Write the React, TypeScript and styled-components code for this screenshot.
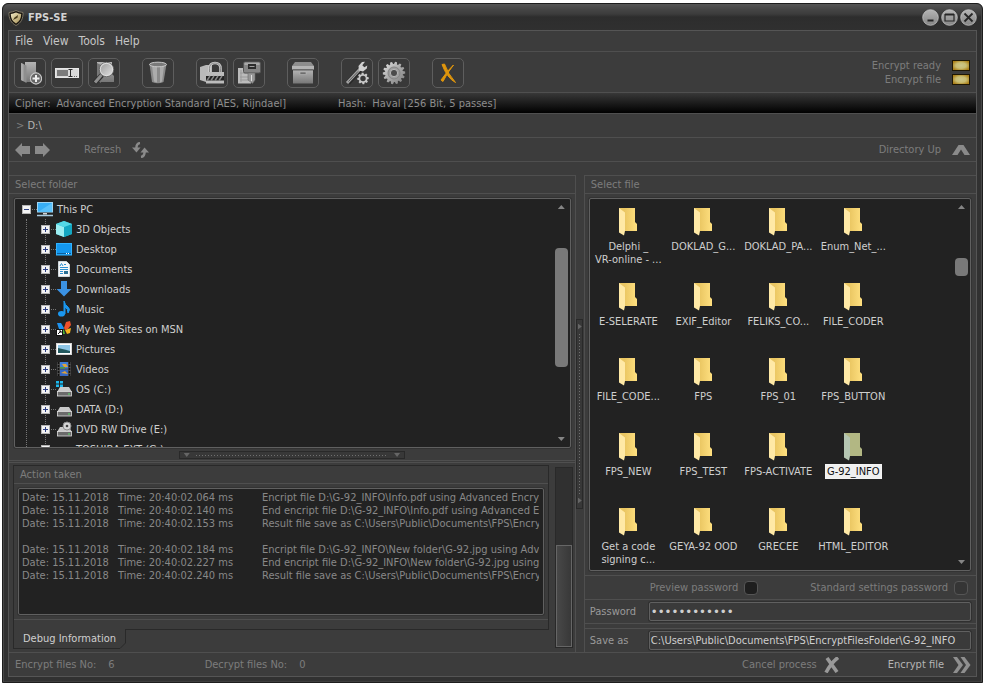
import React from "react";
import styled, { createGlobalStyle, css } from "styled-components";

const c = {
  base: "#3c3c3c",
  line: "#4f4f4f",
  dark: "#292929",
  well: "#222222",
  wellEdge: "#606060",
  dim: "#7c7c7c",
  mid: "#9a9a9a",
  text: "#cfcfcf",
};

const Global = createGlobalStyle`
  * { box-sizing: border-box; }
  body { margin: 0; background: #fff; }
  body, button, input {
    font-family: "DejaVu Sans Condensed", Tahoma, "DejaVu Sans", sans-serif;
    font-size: 11px;
    line-height: 13px;
    color: ${c.dim};
  }
  button { background: none; border: 0; padding: 0; margin: 0; }
  ul { list-style: none; margin: 0; padding: 0; }
  svg { display: block; flex: none; }
`;

const Page = styled.div`
  display: flex;
  height: 100vh;
  min-height: 560px;
  padding: 3px 4px 5px 2px;
`;

const Window = styled.div`
  flex: 1;
  min-width: 0;
  display: flex;
  flex-direction: column;
  padding: 0 5px 5px;
  background: #313131;
  border: 1px solid #1d1d1d;
  border-radius: 6px 6px 0 0;
  box-shadow: inset 1px 0 0 #484848, inset -1px 0 0 #484848, inset 0 -1px 0 #3e3e3e;
  background-image: linear-gradient(#555 0, #444 6px, #3c3c3c 10px, #2d2d2d 13px, #303030 27px, #313131 28px);
`;

const TitleBar = styled.header`
  display: flex;
  align-items: center;
  height: 26px;
  gap: 4px;
  padding: 1px 0 0;
`;

const Title = styled.h1`
  flex: 1;
  margin: 0;
  font-size: 11px;
  line-height: 14px;
  font-weight: bold;
  color: #d2d2d2;
`;

const WindowButtons = styled.div`
  display: flex;
  gap: 2px;
`;

const RoundButton = styled.button`
  display: block;
  width: 17px;
  height: 17px;
`;

const Frame = styled.div`
  flex: 1;
  min-height: 0;
  display: flex;
  flex-direction: column;
  background: ${c.base};
  border: 1px solid #555;
`;

const Row = styled.div<{ $h: number }>`
  display: flex;
  align-items: center;
  flex: none;
  height: ${(p) => p.$h}px;
  padding: 0 6px;
  border-bottom: 1px solid ${c.line};
`;

const Menu = styled.nav`
  display: flex;
  gap: 10px;
`;

const MenuItem = styled.button`
  color: #c6c6c6;
  font-size: 12px;
  line-height: 14px;
`;

const ToolRow = styled(Row)`
  padding-left: 5px;
`;

const Tools = styled.div`
  display: flex;
  flex: 1;
  gap: 22px;
  margin-top: 2px;
`;

const ToolGroup = styled.div`
  display: flex;
  gap: 5px;
`;

const ToolButton = styled.button`
  display: flex;
  align-items: center;
  justify-content: center;
  width: 32px;
  height: 30px;
  border: 1px solid #5e5e5e;
  border-radius: 5px;
  background: #393939;
`;

const Leds = styled.div`
  display: flex;
  flex-direction: column;
  gap: 1px;
`;

const LedRow = styled.div`
  display: flex;
  align-items: center;
  justify-content: flex-end;
  gap: 11px;
`;

const Led = styled.span`
  width: 18px;
  height: 11px;
  border: 1px solid #1f1703;
  background: radial-gradient(ellipse at center, #cdc68a 0, #c9bd72 45%, #ab8019 85%);
`;

const CipherBar = styled(Row)`
  color: #8d8d8d;
  background: linear-gradient(#383838, #000);
`;

const Pair = styled.span<{ $w: number }>`
  display: flex;
  gap: 6px;
  flex: 0 1 ${(p) => p.$w}px;
  white-space: nowrap;
`;

const PathText = styled.span`
  padding-left: 1px;
  color: #b4b4b4;
  i { font-style: normal; color: ${c.dim}; }
`;

const IconButton = styled.button<{ $bright?: boolean; $gap?: number }>`
  display: flex;
  align-items: center;
  gap: ${(p) => p.$gap ?? 9}px;
  color: ${(p) => (p.$bright ? "#b5b5b5" : c.dim)};
  white-space: nowrap;
`;

const Arrows = styled.div`
  display: flex;
  gap: 5px;
  margin-right: 34px;
`;

const Spacer = styled.div`
  flex: 1;
`;

const Main = styled.main`
  flex: 1;
  min-height: 0;
  display: flex;
  padding-top: 13px;
  border-bottom: 1px solid ${c.line};
`;

const Column = styled.section<{ $grow: number; $side: "left" | "right" }>`
  flex: ${(p) => p.$grow} 1 0;
  min-width: 0;
  display: flex;
  flex-direction: column;
  border-${(p) => (p.$side === "left" ? "right" : "left")}: 1px solid ${c.line};
`;

const PanelTitle = styled.h2`
  flex: none;
  margin: 0;
  height: 19px;
  padding: 2px 6px;
  font-size: 11px;
  line-height: 13px;
  font-weight: normal;
  border-top: 1px solid ${c.line};
  border-bottom: 1px solid ${c.line};
`;

const wellStyle = css`
  background: ${c.well};
  border: 1px solid ${c.wellEdge};
  border-radius: 2px;
  box-shadow: 0 0 0 1px #333;
`;

const Well = styled.div`
  ${wellStyle}
  flex: 1;
  min-height: 0;
  display: flex;
  margin: 4px 4px 4px 5px;
  overflow: hidden;
`;

const TreeWell = styled(Well)`
  margin-bottom: 3px;
`;

const FileWell = styled(Well)`
  margin: 4px 5px 4px 4px;
`;

const Tree = styled.ul`
  flex: 1;
  min-width: 0;
  padding-left: 7px;
  overflow: hidden;
`;

const TreeRow = styled.div`
  display: flex;
  align-items: center;
  height: 20px;
  color: ${c.text};
  white-space: nowrap;
`;

const Branch = styled.ul`
  margin-left: 4px;
  padding-left: 14px;
  border-left: 1px dotted #777;
`;

const BranchItem = styled.li`
  background: linear-gradient(#777 50%, transparent 50%) 4px 0 / 1px 2px repeat-y;
`;

const Expander = styled.button`
  display: block;
  width: 9px;
  height: 9px;
`;

const Twig = styled.span`
  width: 5px;
  margin-left: 1px;
  border-top: 1px dotted #777;
`;

const TreeIcon = styled.span`
  width: 16px;
  margin-right: 4px;
`;

const Scroll = styled.div`
  flex: none;
  display: flex;
  flex-direction: column;
  align-items: center;
  width: 17px;
  padding: 6px 2px;
`;

const ScrollArrow = styled.button<{ $down?: boolean }>`
  width: 7px;
  height: 4px;
  background: #858585;
  clip-path: ${(p) => (p.$down ? "polygon(0 0, 100% 0, 50% 100%)" : "polygon(50% 0, 100% 100%, 0 100%)")};
`;

const Track = styled.div`
  flex: 1;
  width: 13px;
  padding: 4px 0;
  display: flex;
  flex-direction: column;
`;

const Before = styled.div`
  flex: none;
`;

const Thumb = styled.div`
  flex: none;
  min-height: 18px;
  background: #797979;
  border-radius: 4px;
`;

const grip = "repeating-linear-gradient";

const HGrip = styled.div`
  flex: none;
  align-self: center;
  display: flex;
  align-items: center;
  gap: 6px;
  width: 40%;
  height: 8px;
  margin: 0 0 1px;
  padding: 0 4px;
  border: 1px solid ${c.dark};
  background: #383838;
`;

const VGutter = styled.div`
  flex: none;
  display: flex;
  align-items: center;
  justify-content: center;
  width: 8px;
`;

const VGrip = styled.div`
  display: flex;
  flex-direction: column;
  align-items: center;
  gap: 4px;
  width: 7px;
  height: 190px;
  padding: 4px 0;
  border: 1px solid ${c.dark};
  background: #383838;
`;

const HDots = styled.div`
  flex: 1;
  height: 1px;
  background: ${grip}(90deg, #707070 0 1px, transparent 1px 3px);
`;

const VDots = styled.div`
  flex: 1;
  width: 1px;
  background: ${grip}(#707070 0 1px, transparent 1px 3px);
`;

const GripMark = styled.span<{ $dir: "down" | "right" }>`
  width: ${(p) => (p.$dir === "down" ? 6 : 4)}px;
  height: ${(p) => (p.$dir === "down" ? 4 : 6)}px;
  background: #666;
  clip-path: ${(p) => (p.$dir === "down" ? "polygon(0 0, 100% 0, 50% 100%)" : "polygon(0 0, 100% 50%, 0 100%)")};
`;

const Lower = styled.div`
  flex: none;
  display: flex;
  gap: 6px;
  padding: 2px 2px 3px 4px;
  border-top: 3px double ${c.line};
`;

const Tabs = styled.div`
  flex: 1;
  min-width: 0;
`;

const TabBody = styled.div`
  border: 1px solid ${c.dark};
  border-bottom: 0;
`;

const LogTitle = styled(PanelTitle)`
  height: 18px;
  border-top: 0;
`;

const Log = styled.div`
  ${wellStyle}
  height: 127px;
  margin: 4px 4px 4px;
  padding: 2px 4px 0 3px;
`;

const LogRows = styled.div`
  overflow: hidden;
`;

const LogLine = styled.div`
  display: grid;
  grid-template-columns: 96px 144px 1fr;
  height: 13px;
  color: #888;
  white-space: pre;
`;

const TabRule = styled.div`
  height: 10px;
  border-top: 1px solid ${c.line};
`;

const TabStrip = styled.div`
  display: flex;
`;

const TabButton = styled.button`
  height: 20px;
  padding: 0 4px 1px 9px;
  border-left: 1px solid ${c.dark};
  border-bottom: 1px solid ${c.dark};
  color: ${c.text};
`;

const TabFill = styled.div`
  flex: 1;
  border-top: 1px solid ${c.dark};
  margin-left: -1px;
`;

const OuterTrack = styled.div`
  flex: none;
  display: flex;
  flex-direction: column;
  justify-content: flex-end;
  width: 18px;
  margin: 2px 0 1px;
  background: #303030;
  border: 1px solid ${c.dark};
`;

const OuterThumb = styled.div`
  height: 57%;
  background: linear-gradient(90deg, #484848, #383838);
  border: 1px solid #666;
`;

const Files = styled.ul`
  flex: 1;
  min-width: 0;
  display: grid;
  grid-template-columns: repeat(4, 75px);
  grid-auto-rows: 75px;
  padding: 9px 0 0 1px;
  overflow: hidden;
`;

const FileItem = styled.li`
  display: flex;
  flex-direction: column;
  align-items: center;
  gap: 3px;
`;

const FileLabel = styled.span<{ $on?: boolean }>`
  padding: 0 1px;
  border: 1px solid ${(p) => (p.$on ? "#f4f4f4" : "transparent")};
  background: ${(p) => (p.$on ? "#f0f0f0" : "none")};
  color: ${(p) => (p.$on ? "#111" : c.text)};
  text-align: center;
  white-space: pre;
`;

const CheckRow = styled(Row)`
  justify-content: flex-end;
  gap: 52px;
  padding-right: 8px;
  border-top: 1px solid ${c.line};
`;

const Check = styled.label`
  display: flex;
  align-items: center;
  gap: 6px;
  white-space: nowrap;
`;

const Box = styled.input`
  appearance: none;
  width: 14px;
  height: 14px;
  margin: 0;
  border: 1px solid #555;
  border-radius: 4px;
  background: #1e1e1e;
  &:disabled { background: #353535; }
`;

const Field = styled.div<{ $last?: boolean }>`
  flex: none;
  display: flex;
  align-items: center;
  height: 24px;
  padding: 0 5px;
  color: ${c.mid};
  ${(p) => (p.$last
    ? css`margin-top: 4px; border-top: 1px solid ${c.line};`
    : css`border-bottom: 1px solid ${c.line};`)}
  label { width: 59px; }
`;

const Input = styled.input`
  flex: 1;
  min-width: 0;
  height: 19px;
  padding: 0 1px;
  border: 1px solid ${c.wellEdge};
  border-radius: 2px;
  background: #3a3a3a;
  box-shadow: 0 0 0 1px #303030;
  color: ${c.text};
  outline: none;
  &[type="password"] { font-size: 13px; }
`;

const Status = styled.footer`
  flex: none;
  display: flex;
  align-items: center;
  height: 23px;
  padding: 0 5px 0 6px;
`;

const Count = styled.span`
  display: flex;
  gap: 12px;
  margin-right: 90px;
`;

const Actions = styled.div`
  display: flex;
  gap: 48px;
`;

/* ---------- icons ---------- */

const Gradients = () => (
  <svg width="0" height="0" aria-hidden="true">
    <defs>
      <linearGradient id="metal" x1="0" y1="0" x2="1" y2="1">
        <stop offset="0" stopColor="#e2e2e2" />
        <stop offset=".5" stopColor="#a9a9a9" />
        <stop offset="1" stopColor="#7b7b7b" />
      </linearGradient>
      <linearGradient id="lens" x1="0" y1="0" x2="1" y2="1">
        <stop offset="0" stopColor="#9e9e9e" />
        <stop offset="1" stopColor="#dedede" />
      </linearGradient>
      <linearGradient id="sheet" x1="0" y1="0" x2="0" y2="1">
        <stop offset="0" stopColor="#b4b4b4" />
        <stop offset="1" stopColor="#777" />
      </linearGradient>
      <linearGradient id="disc" x1="0" y1="0" x2="0" y2="1">
        <stop offset="0" stopColor="#b5b5b5" />
        <stop offset="1" stopColor="#858585" />
      </linearGradient>
      <linearGradient id="fold" x1="0" y1="0" x2="1" y2="0">
        <stop offset=".3" stopColor="#eac662" />
        <stop offset="1" stopColor="#ffe080" />
      </linearGradient>
      <linearGradient id="gold" x1="0" y1="0" x2="1" y2="1">
        <stop offset="0" stopColor="#f3ecc6" />
        <stop offset="1" stopColor="#a48d52" />
      </linearGradient>
    </defs>
  </svg>
);

const Shield = () => (
  <svg width="16" height="16" viewBox="0 0 15 16">
    <path d="M7.500 .5C10 1.800 12 2 14.500 2.500C14.800 8.500 12.500 13 7.500 15.500C2.500 13 .2 8.500 .5 2.500C3 2 5 1.800 7.500 .5Z" fill="#191510" stroke="#8f8874" strokeWidth=".8" />
    <path d="M7.500 2.500C9.500 3.500 11 3.600 12.700 4C12.700 8.500 11 11.600 7.500 13.500C4 11.600 2.300 8.500 2.300 4C4 3.600 5.500 3.500 7.500 2.500Z" fill="url(#gold)" />
    <path d="M4.500 10L6 7.500L9.500 5L9 7.800L6.500 9Z" fill="#4a3d1c" />
  </svg>
);

const Disc = ({ children }: { children: React.ReactNode }) => (
  <svg width="17" height="17" viewBox="0 0 17 17">
    <circle cx="8.500" cy="8.500" r="7.800" fill="url(#disc)" stroke="#c4c4c4" strokeWidth=".8" />
    <g fill="none" stroke="#262626">{children}</g>
  </svg>
);

const gearPath = (cx: number, cy: number, outer: number, inner: number, n: number) => {
  const pts: string[] = [];
  for (let i = 0; i < n; i++) {
    [[-0.5, inner], [-0.28, outer], [0.1, outer], [0.28, inner]].forEach(([o, r]) => {
      const a = ((i + o) / n) * Math.PI * 2;
      pts.push(`${(cx + r * Math.cos(a)).toFixed(2)} ${(cy + r * Math.sin(a)).toFixed(2)}`);
    });
  }
  return `M${pts.join("L")}Z`;
};

const toolArt: Record<string, React.ReactNode> = {
  "Add folder": (
    <>
      <path d="M7 1H18V11L19.500 12.500V21H7Z" fill="url(#sheet)" />
      <path d="M3 2L8.500 4.500V22L3 19Z" fill="#8e8e8e" />
      <path d="M3 2L5.500 3V20.300L3 19Z" fill="#a9a9a9" />
      <circle cx="18" cy="17.500" r="5.600" fill="#666" stroke="#c9c9c9" strokeWidth="1.100" />
      <path d="M18 14V21M14.500 17.500H21.500" stroke="#f0f0f0" strokeWidth="2" />
    </>
  ),
  Rename: (
    <>
      <rect x=".5" y="7.500" width="23" height="9" fill="#d9d9d9" stroke="#e6e6e6" />
      <rect x="2" y="9" width="11" height="6" fill="#7b7b7b" />
      <path d="M13.500 8.500H17.500M15.500 8.500V15.500M13.500 15.500H17.500" stroke="#2b2b2b" />
      <path d="M19 15.500H22" stroke="#666" strokeDasharray="1 1" />
    </>
  ),
  "Find folder": (
    <>
      <path d="M5 1H20V13L22 15V21H5Z" fill="url(#sheet)" />
      <path d="M5 2L9 4V22L5 19Z" fill="#777" />
      <path d="M10 14L2.500 22" stroke="#2f2f2f" strokeWidth="5" />
      <path d="M9.500 14L3 21.500" stroke="#8f8f8f" strokeWidth="3" />
      <circle cx="14.500" cy="8.500" r="7.200" fill="#e0e0e0" stroke="#5c5c5c" strokeWidth=".8" />
      <circle cx="14.500" cy="8.500" r="5.800" fill="url(#lens)" />
    </>
  ),
  Delete: (
    <>
      <path d="M3.500 3L6 21Q12 23.500 17.500 21L20.500 3Z" fill="#8a8a8a" />
      <path d="M6 5L8 20.500L11 21.500V5ZM14 5V21.500L16 20.500L18 5Z" fill="#acacac" />
      <ellipse cx="12" cy="3.500" rx="8.500" ry="2.300" fill="#7a7a7a" stroke="#c9c9c9" />
    </>
  ),
  "Encrypt folder": (
    <>
      <path d="M0 6L6 4V21L0 19ZM6 4H12V20H6Z" fill="#b9b9b9" />
      <path d="M9.500 13V7.500Q9.500 2 15 2T20.500 7.500V13" fill="none" stroke="#d0d0d0" strokeWidth="2.500" />
      <path d="M9.500 13V7.500Q9.500 2 15 2T20.500 7.500V13" fill="none" stroke="#777" strokeWidth=".8" />
      <rect x="6" y="11" width="18" height="11.500" fill="#bcbcbc" />
      <rect x="6" y="15" width="18" height="4.500" fill="#222" />
      <path d="M7 19.500L10 15M11 19.500L14 15M15 19.500L18 15M19 19.500L22 15" stroke="#858585" strokeWidth="1.500" />
    </>
  ),
  "Encrypt key": (
    <>
      <path d="M1 7H14V22.500H1Z" fill="#bcbcbc" />
      <path d="M4 9V21M3 12H12M3 16H12M3 19H12" stroke="#9a9a9a" />
      <rect x="6.500" y="1" width="17" height="11" rx="1.500" fill="#858585" stroke="#555" />
      <rect x="7.500" y="1.500" width="15" height="2.500" fill="#a8a8a8" />
      <rect x="11" y="3" width="8" height="5" fill="#2c2c2c" />
      <rect x="12.500" y="5" width="5" height="1" fill="#a0a0a0" />
      <path d="M11 12H18V19L15.500 22.500L11 19Z" fill="#979797" stroke="#6a6a6a" strokeWidth=".6" />
      <path d="M14.500 14V20" stroke="#ddd" />
    </>
  ),
  Archive: (
    <>
      <path d="M1 5L4 1H20L23 5V8H1Z" fill="#8d8d8d" />
      <path d="M1 5H23V8.500H1Z" fill="#b4b4b4" />
      <rect x="2" y="9" width="20" height="13.500" fill="url(#sheet)" />
      <path d="M2 9H22" stroke="#606060" />
      <rect x="9" y="11" width="6" height="2.500" fill="#6d6d6d" stroke="#b9b9b9" strokeWidth=".6" />
    </>
  ),
  Options: (
    <>
      <path d="M3 22L15 8.500" stroke="#292929" strokeWidth="5" />
      <path d="M2 22L15 8" stroke="#a3a3a3" strokeWidth="3" />
      <path d="M3.500 20.500L13 10.500" stroke="#595959" />
      <path d="M14 9.500L13.500 5L17 1L20 .8L17.300 4.200L19.300 6.200L22.300 4.400L21.800 7.500L18 10.500Z" fill="#d0d0d0" />
      <path d={gearPath(18, 17.500, 5.800, 4.300, 8)} fill="#c9c9c9" />
      <circle cx="18" cy="17.500" r="2.700" fill="#393939" />
    </>
  ),
  Settings: (
    <>
      <path d={gearPath(12, 12, 11.200, 9, 14)} fill="url(#metal)" />
      <circle cx="12" cy="12" r="6" fill="#9d9d9d" stroke="#858585" />
      <circle cx="12" cy="12" r="3.600" fill="#4b4b4b" stroke="#d5d5d5" strokeWidth=".7" />
    </>
  ),
  Exit: (
    <g strokeLinejoin="round">
      <path d="M6 3.500L8.500 3Q12 13 19.500 21.500Q11 17 6 3.500Z" fill="#e0960c" stroke="#e0960c" />
      <path d="M17.500 4Q12 9 5 19L7 20.500Q11 12 17.500 4Z" fill="#e0960c" stroke="#e0960c" />
    </g>
  ),
};

const Drive = () => (
  <>
    <path d="M4 6H13L16 11H1Z" fill="#c9c9c9" />
    <rect x="1.500" y="10.500" width="14" height="4.500" fill="#6b6b6b" stroke="#ddd" strokeWidth=".8" />
    <rect x="12" y="12.500" width="2" height="1" fill="#58e06a" />
  </>
);

const treeArt: Record<string, React.ReactNode> = {
  "This PC": (
    <>
      <rect x=".5" y="1.500" width="15" height="9.500" fill="#38aef5" stroke="#9fd4f2" />
      <path d="M1 11L15 2V11Z" fill="#5bc2fb" />
      <path d="M6 12H10V13.500H6Z" fill="#d5d5d5" />
      <path d="M0 14.500H16" stroke="#a9cbe0" strokeWidth="1.500" />
    </>
  ),
  "3D Objects": (
    <>
      <path d="M8 0L16 3V13L8 16L0 13V3Z" fill="#23bdd3" />
      <path d="M0 3L8 6V16L0 13Z" fill="#9ceef2" />
      <path d="M8 6L16 3V13L8 16Z" fill="#14a7c2" />
      <path d="M8 0L16 3L8 6L0 3Z" fill="#55d8e6" />
    </>
  ),
  Desktop: (
    <>
      <rect x=".5" y="2.500" width="15" height="11.500" fill="#1497ee" stroke="#30b2ff" />
      <path d="M1 12.500H15" stroke="#0b5f9c" />
      <path d="M10 12.500H11M12 12.500H13" stroke="#fff" />
    </>
  ),
  Documents: (
    <>
      <path d="M2.500 .5H10.500L13.500 3.500V15.500H2.500Z" fill="#f7f7f7" stroke="#cfd8dc" />
      <path d="M4 5L5.500 2.500L7 5M8 3.500H10M4 6.500H12M4 8.500H12M4 10.500H7M4 12.500H7" stroke="#2b8fd0" fill="none" />
      <rect x="8" y="10" width="4" height="3" fill="#2a6f93" />
    </>
  ),
  Downloads: <path d="M5 0H11V8H15.500L8 15.500L.5 8H5Z" fill="#3b92e4" />,
  Music: (
    <>
      <ellipse cx="5.500" cy="12.800" rx="3.500" ry="2.800" fill="#1a97ef" />
      <path d="M8 13V0Q9 4 12 6T12 12Q12 7.500 9 6V13Z" fill="#1a97ef" stroke="#1a97ef" />
    </>
  ),
  "My Web Sites on MSN": (
    <>
      <path d="M1 2L5 2L8 7L7 9L3 8Z" fill="#1e93f0" />
      <path d="M8 7L10 1L14 0L15 4L12 8L9 9Z" fill="#f0502a" />
      <path d="M9 9L15 7L14 12L11 13Z" fill="#f5b41c" />
      <path d="M5 9L8 9L9 13L6 13Z" fill="#4bb035" />
      <rect x=".5" y="8.500" width="6" height="6" fill="#fff" stroke="#111" />
      <path d="M2 13L5 10M3 10H5V12" stroke="#111" fill="none" />
    </>
  ),
  Pictures: (
    <>
      <rect x=".5" y="2.500" width="15" height="11" fill="#fff" stroke="#d7d7d7" />
      <rect x="2" y="4" width="12" height="8" fill="#8fc7e8" />
      <path d="M2 7Q7 8 14 10V12H2Z" fill="#22585e" />
    </>
  ),
  Videos: (
    <>
      <rect x="1" y="1" width="14" height="14" fill="#4a4a4a" />
      <path d="M2.500 1V15M13.500 1V15" stroke="#111" strokeWidth="1.500" strokeDasharray="2 1" />
      <rect x="4" y="1" width="8" height="6.500" fill="#3f7fd8" />
      <rect x="4" y="8.500" width="8" height="6.500" fill="#3567c4" />
      <path d="M6 3H10L12 6H8ZM5 12L9 10L12 13Z" fill="#e0a33a" />
      <path d="M4 6H9V7.500H4Z" fill="#4c9a45" />
    </>
  ),
  "OS (C:)": (
    <>
      <Drive />
      <path d="M0 0H3V2.500H0ZM4 0H7V2.500H4ZM0 3.500H3V6H0ZM4 3.500H7V6H4Z" fill="#1cb8ee" />
    </>
  ),
  "DATA (D:)": <Drive />,
  "DVD RW Drive (E:)": (
    <>
      <Drive />
      <circle cx="11" cy="5" r="4" fill="#d6d6d6" stroke="#8d8d8d" />
      <circle cx="11" cy="5" r="1.300" fill="#444" />
    </>
  ),
  "TOSHIBA EXT (G:)": <Drive />,
};

const FolderIcon = ({ selected }: { selected?: boolean }) => (
  <svg width="18" height="28" viewBox="0 0 18 28">
    <path d="M0 0H16V14L18 16V23H0Z" fill={selected ? "#b2b783" : "url(#fold)"} />
    <path d="M0 0L6 4.500V23L5 27.500L0 24.500Z" fill={selected ? "#b5c6b2" : "#ffe9a6"} />
  </svg>
);

const PlusMinus = ({ minus }: { minus?: boolean }) => (
  <svg width="9" height="9" viewBox="0 0 9 9">
    <rect width="9" height="9" fill="#f4f4f4" />
    <rect x=".5" y=".5" width="8" height="8" fill="none" stroke="#b5b5b5" />
    <path d={minus ? "M2 4.500H7" : "M2 4.500H7M4.500 2V7"} stroke="#2c3f82" />
  </svg>
);

/* ---------- data ---------- */

const toolGroups = [
  ["Add folder", "Rename", "Find folder"],
  ["Delete"],
  ["Encrypt folder", "Encrypt key"],
  ["Archive"],
  ["Options", "Settings"],
  ["Exit"],
];

const files = [
  "Delphi _\nVR-online - ...", "DOKLAD_G...", "DOKLAD_PA...", "Enum_Net_...",
  "E-SELERATE", "EXIF_Editor", "FELIKS_CO...", "FILE_CODER",
  "FILE_CODE...", "FPS", "FPS_01", "FPS_BUTTON",
  "FPS_NEW", "FPS_TEST", "FPS-ACTIVATE", "G-92_INFO",
  "Get a code\nsigning c...", "GEYA-92 OOD", "GRECEE", "HTML_EDITOR",
];

const log: [string, string][] = [
  ["20:40:02.064", "Encript file D:\\G-92_INFO\\Info.pdf using Advanced Encryp"],
  ["20:40:02.140", "End encript file D:\\G-92_INFO\\Info.pdf using Advanced En"],
  ["20:40:02.153", "Result file save as C:\\Users\\Public\\Documents\\FPS\\Encryp"],
  ["", ""],
  ["20:40:02.184", "Encript file D:\\G-92_INFO\\New folder\\G-92.jpg using Adva"],
  ["20:40:02.227", "End encript file D:\\G-92_INFO\\New folder\\G-92.jpg using"],
  ["20:40:02.240", "Result file save as C:\\Users\\Public\\Documents\\FPS\\Encryp"],
];

const ScrollBar = ({ start, size }: { start: number; size: number }) => (
  <Scroll>
    <ScrollArrow aria-label="Scroll up" />
    <Track>
      <Before style={{ height: `${start}%` }} />
      <Thumb style={{ height: `${size}%` }} />
    </Track>
    <ScrollArrow $down aria-label="Scroll down" />
  </Scroll>
);

const TreeNode = ({ name, open }: { name: string; open?: boolean }) => (
  <TreeRow>
    <Expander aria-label={`${open ? "Collapse" : "Expand"} ${name}`}>
      <PlusMinus minus={open} />
    </Expander>
    <Twig />
    <TreeIcon>
      <svg width="16" height="16" viewBox="0 0 16 16">{treeArt[name]}</svg>
    </TreeIcon>
    {name}
  </TreeRow>
);

export default function App() {
  return (
    <Page>
      <Global />
      <Window>
        <TitleBar>
          <Shield />
          <Title>FPS-SE</Title>
          <WindowButtons>
            <RoundButton aria-label="Minimize"><Disc><path d="M5.500 11.500H11.500" strokeWidth="2" /></Disc></RoundButton>
            <RoundButton aria-label="Maximize"><Disc><path d="M4 5.500H13V12H4Z" strokeWidth="1.200" /><path d="M4 5.500H13" strokeWidth="2" /></Disc></RoundButton>
            <RoundButton aria-label="Close"><Disc><path d="M4.500 4.500L12.500 12.500M12.500 4.500L4.500 12.500" strokeWidth="1.800" /></Disc></RoundButton>
          </WindowButtons>
        </TitleBar>
        <Frame>
          <Row $h={21}>
            <Menu>
              {["File", "View", "Tools", "Help"].map((m) => <MenuItem key={m}>{m}</MenuItem>)}
            </Menu>
          </Row>
          <ToolRow $h={41}>
            <Tools>
              {toolGroups.map((group) => (
                <ToolGroup key={group[0]}>
                  {group.map((t) => (
                    <ToolButton key={t} aria-label={t}>
                      <svg width="24" height="24" viewBox="0 0 24 24">{toolArt[t]}</svg>
                    </ToolButton>
                  ))}
                </ToolGroup>
              ))}
            </Tools>
            <Leds>
              <LedRow>Encrypt ready<Led /></LedRow>
              <LedRow>Encrypt file<Led /></LedRow>
            </Leds>
          </ToolRow>
          <CipherBar $h={21}>
            <Pair $w={323}><span>Cipher:</span><span>Advanced Encryption Standard [AES, Rijndael]</span></Pair>
            <Pair $w={300}><span>Hash:</span><span>Haval [256 Bit, 5 passes]</span></Pair>
          </CipherBar>
          <Row $h={24}>
            <PathText><i>&gt;</i> D:\</PathText>
          </Row>
          <Row $h={24}>
            <Arrows>
              <IconButton aria-label="Back">
                <svg width="15" height="14" viewBox="0 0 15 14"><path d="M0 7L7 0V3H15V11H7V14Z" fill="#8a8a8a" /></svg>
              </IconButton>
              <IconButton aria-label="Forward">
                <svg width="15" height="14" viewBox="0 0 15 14"><path d="M15 7L8 0V3H0V11H8V14Z" fill="#8a8a8a" /></svg>
              </IconButton>
            </Arrows>
            <IconButton $gap={11}>
              Refresh
              <svg width="17" height="16" viewBox="0 0 17 16">
                <path d="M8 1Q4 1.500 4.500 7" fill="none" stroke="#8a8a8a" strokeWidth="2.400" />
                <path d="M0 5.500H8.500L4.500 10.500Z" fill="#8a8a8a" />
                <path d="M9 15Q13 14.500 12.500 9" fill="none" stroke="#8a8a8a" strokeWidth="2.400" />
                <path d="M8.500 10.500H17L12.500 5.500Z" fill="#8a8a8a" />
              </svg>
            </IconButton>
            <Spacer />
            <IconButton $gap={11}>
              Directory Up
              <svg width="18" height="10" viewBox="0 0 18 10"><path d="M0 10L6.500 0H11.500L18 10H12.500L9 4.500L5.500 10Z" fill="#8a8a8a" /></svg>
            </IconButton>
          </Row>
          <Main>
            <Column $grow={567} $side="left">
              <PanelTitle>Select folder</PanelTitle>
              <TreeWell>
                <Tree>
                  <li>
                    <TreeNode name="This PC" open />
                    <Branch>
                      {Object.keys(treeArt).slice(1).map((n) => (
                        <BranchItem key={n}><TreeNode name={n} /></BranchItem>
                      ))}
                    </Branch>
                  </li>
                </Tree>
                <ScrollBar start={16} size={54} />
              </TreeWell>
              <HGrip><GripMark $dir="down" /><HDots /><GripMark $dir="down" /></HGrip>
              <Lower>
                <Tabs>
                  <TabBody>
                    <LogTitle>Action taken</LogTitle>
                    <Log>
                      <LogRows>
                        {log.map(([time, what], i) => (
                          <LogLine key={i}>
                            {time && <><span>Date: 15.11.2018</span><span>Time: {time} ms</span><span>{what}</span></>}
                          </LogLine>
                        ))}
                      </LogRows>
                    </Log>
                    <TabRule />
                  </TabBody>
                  <TabStrip>
                    <TabButton>Debug Information</TabButton>
                    <svg width="6" height="20" viewBox="0 0 6 20"><path d="M0 19.500L5.500 14V0" fill="none" stroke={c.dark} /></svg>
                    <TabFill />
                  </TabStrip>
                </Tabs>
                <OuterTrack><OuterThumb /></OuterTrack>
              </Lower>
            </Column>
            <VGutter>
              <VGrip><GripMark $dir="right" /><VDots /><GripMark $dir="right" /></VGrip>
            </VGutter>
            <Column $grow={392} $side="right">
              <PanelTitle>Select file</PanelTitle>
              <FileWell>
                <Files>
                  {files.map((f) => {
                    const on = f === "G-92_INFO";
                    return (
                      <FileItem key={f}>
                        <FolderIcon selected={on} />
                        <FileLabel $on={on}>{f}</FileLabel>
                      </FileItem>
                    );
                  })}
                </Files>
                <ScrollBar start={13} size={4} />
              </FileWell>
              <CheckRow $h={25}>
                <Check>Preview password<Box type="checkbox" /></Check>
                <Check>Standard settings password<Box type="checkbox" disabled /></Check>
              </CheckRow>
              <Field>
                <label htmlFor="password">Password</label>
                <Input id="password" type="password" defaultValue="encryptfiles" />
              </Field>
              <Field $last>
                <label htmlFor="target">Save as</label>
                <Input id="target" type="text" defaultValue="C:\Users\Public\Documents\FPS\EncryptFilesFolder\G-92_INFO" />
              </Field>
            </Column>
          </Main>
          <Status>
            <Count><span>Encrypt files No:</span><span>6</span></Count>
            <Count><span>Decrypt files No:</span><span>0</span></Count>
            <Spacer />
            <Actions>
              <IconButton $gap={7}>
                Cancel process
                <svg width="16" height="16" viewBox="0 0 16 16"><path d="M3 1L13 15M14 .5Q7 6 2 15.500" fill="none" stroke="#999" strokeWidth="3.600" /></svg>
              </IconButton>
              <IconButton $bright>
                Encrypt file
                <svg width="18" height="16" viewBox="0 0 18 16"><path d="M0 0H4L10 8L4 16H0L5.500 8ZM7.500 0H11.500L17.500 8L11.500 16H7.500L13 8Z" fill="#8f8f8f" /></svg>
              </IconButton>
            </Actions>
          </Status>
        </Frame>
      </Window>
      <Gradients />
    </Page>
  );
}
